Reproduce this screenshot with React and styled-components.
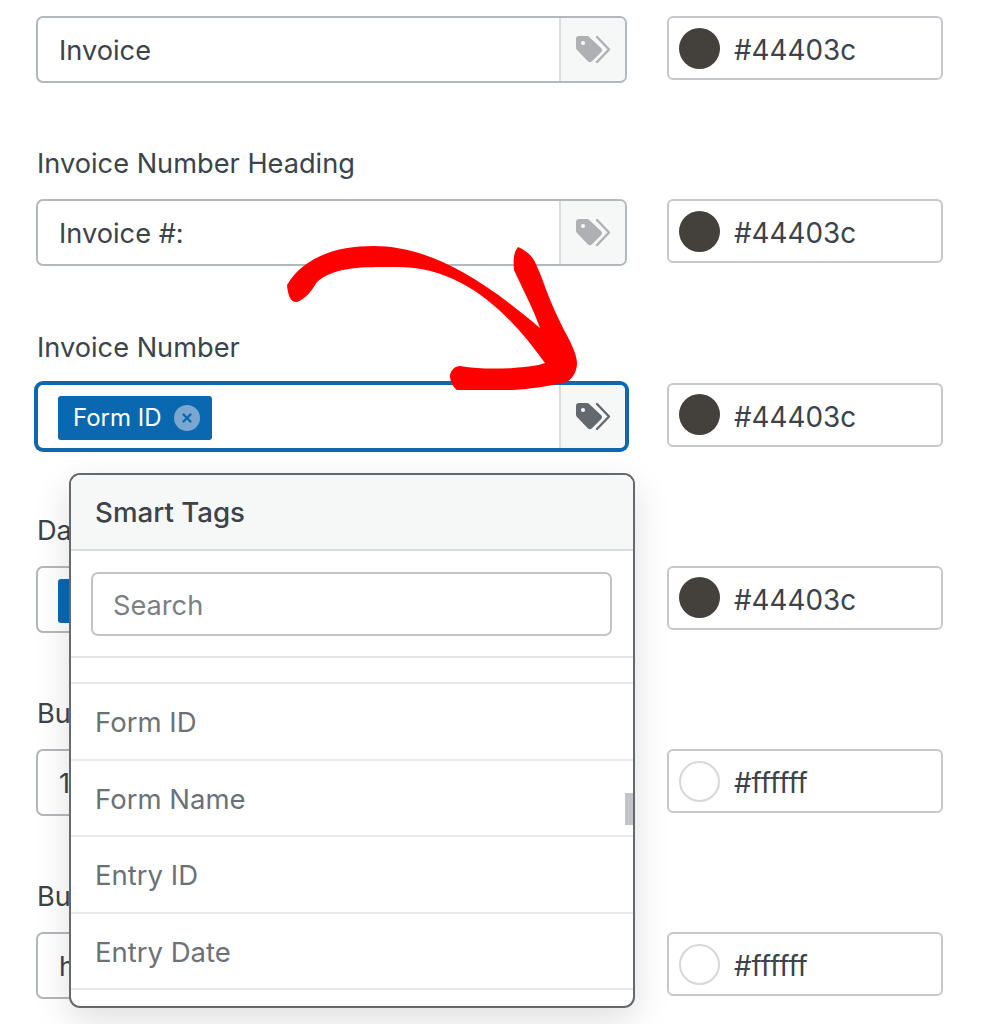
import React from "react";
import styled, { createGlobalStyle } from "styled-components";

const GlobalStyle = createGlobalStyle`
  html, body {
    margin: 0;
    padding: 0;
    background: #fff;
  }
  body {
    font-family: Inter, "Liberation Sans", sans-serif;
    color: #3c434a;
    overflow: hidden;
  }
`;

const Page = styled.div`
  position: relative;
  width: 1001px;
  height: 1024px;
  overflow: hidden;
  box-sizing: border-box;
  padding: 16px 0 0 36px;
`;

const Row = styled.div`
  margin-bottom: 62.3px;
`;

const Label = styled.div`
  font-size: 27.2px;
  line-height: 37px;
  height: 36px;
  margin: 0 0 18px 1px;
`;

const Fields = styled.div`
  display: grid;
  grid-template-columns: 591px 276px;
  column-gap: 40px;
  align-items: start;
`;

const InputBox = styled.div`
  box-sizing: border-box;
  height: 67px;
  display: flex;
  align-items: stretch;
  background: #fff;
  border: 2px solid ${(p) => (p.$focused ? "#0f68ae" : "#b4b7bb")};
  box-shadow: ${(p) => (p.$focused ? "0 0 0 2px #0f68ae" : "none")};
  border-radius: 7px;
`;

const InputText = styled.div`
  flex: 1;
  display: flex;
  align-items: center;
  padding: 2px 0 0 ${(p) => (p.$chip ? "20px" : "21px")};
  font-size: 27.2px;
  white-space: nowrap;
  overflow: hidden;
`;

const TagButton = styled.div`
  width: 66px;
  display: flex;
  align-items: center;
  justify-content: center;
  background: #f6f7f7;
  border-left: 2px solid #dcdcde;
  border-radius: 0 5px 5px 0;
  color: ${(p) => (p.$focused ? "#646970" : "#aeb0b4")};
  box-sizing: border-box;
`;

const Chip = styled.div`
  display: flex;
  align-items: center;
  gap: 12px;
  height: 44px;
  margin-top: 1px;
  padding: 0 12px 0 15px;
  background: #0a68b0;
  border-radius: 3px;
  color: #fff;
  font-size: 24px;
`;

const ChipClose = styled.span`
  width: 26px;
  height: 26px;
  border-radius: 50%;
  background: #7ba6cf;
  color: #0a68b0;
  display: flex;
  align-items: center;
  justify-content: center;
`;

const ColorBox = styled.div`
  box-sizing: border-box;
  height: 64px;
  display: flex;
  align-items: center;
  gap: 14px;
  padding-left: 10px;
  border: 2px solid #c6c8cc;
  border-radius: 6px;
  background: #fff;
`;

const ColorText = styled.span`
  font-size: 27.8px;
  margin-top: 4px;
`;

const Swatch = styled.span`
  box-sizing: border-box;
  width: 41px;
  height: 41px;
  border-radius: 50%;
  background: ${(p) => p.$color};
  border: ${(p) => (p.$color === "#ffffff" ? "2px solid #d6d7d9" : "none")};
`;

const Dropdown = styled.div`
  position: absolute;
  left: 69px;
  top: 473px;
  width: 566px;
  height: 535px;
  box-sizing: border-box;
  background: #fff;
  border: 2px solid #646970;
  border-radius: 11px;
  overflow: hidden;
  box-shadow: 0 12px 36px rgba(0, 0, 0, 0.13);
`;

const DropdownHeader = styled.div`
  box-sizing: border-box;
  height: 76px;
  display: flex;
  align-items: center;
  padding-left: 24px;
  background: #f6f7f7;
  border-bottom: 2px solid #dcdcde;
  font-size: 27.7px;
  font-weight: 500;
`;

const SearchArea = styled.div`
  box-sizing: border-box;
  height: 107px;
  padding: 21px 21px 0 20px;
  border-bottom: 2px solid #e4e5e7;
`;

const SearchInput = styled.div`
  box-sizing: border-box;
  height: 64px;
  display: flex;
  align-items: center;
  padding: 3px 0 0 20px;
  border: 2px solid #c3c4c7;
  border-radius: 7px;
  font-size: 27.2px;
  color: #7b8085;
`;

const List = styled.div`
  padding-top: 24px;
`;

const Item = styled.div`
  box-sizing: border-box;
  height: 76.5px;
  display: flex;
  align-items: center;
  padding: 2px 0 0 24px;
  border-top: 2px solid #e9eaeb;
  font-size: 27.5px;
  color: #6c7177;
  &:last-child {
    border-bottom: 2px solid #e9eaeb;
    height: 78px;
  }
`;

const ScrollThumb = styled.div`
  position: absolute;
  right: 0;
  top: 318px;
  width: 8px;
  height: 32px;
  background: #c3c4c7;
`;

const Arrow = styled.svg`
  position: absolute;
  left: 280px;
  top: 240px;
  width: 310px;
  height: 160px;
`;

const TagsIcon = () => (
  <svg width="36" height="29" viewBox="0 0 36 29">
    <path
      fill="currentColor"
      d="M1 4a3 3 0 0 1 3-3h8a3 3 0 0 1 2.2.9L26 13a3 3 0 0 1 0 4.2L17 26.2a3 3 0 0 1-4.2 0L2 15a3 3 0 0 1-1-2.2Z"
    />
    <circle cx="8" cy="8" r="2.1" fill="#f6f7f7" />
    <path
      fill="none"
      stroke="currentColor"
      strokeWidth="2.4"
      strokeLinecap="round"
      strokeLinejoin="round"
      d="M22 2L34 14.5L22 27"
    />
  </svg>
);

const rows = [
  { value: "Invoice", color: "#44403c" },
  { label: "Invoice Number Heading", value: "Invoice #:", color: "#44403c" },
  { label: "Invoice Number", chip: "Form ID", color: "#44403c", focused: true },
  { label: "Date", chip: "Entry Date", color: "#44403c" },
  { label: "Button Text", value: "1", color: "#ffffff" },
  { label: "Button Link", value: "https://", color: "#ffffff" },
];

const items = ["Form ID", "Form Name", "Entry ID", "Entry Date"];

const App = () => {
  return (
    <Page>
      <GlobalStyle />
      {rows.map((row, index) => (
        <Row key={index}>
          {row.label && <Label>{row.label}</Label>}
          <Fields>
            <InputBox $focused={row.focused}>
              <InputText $chip={!!row.chip}>
                {row.chip ? (
                  <Chip>
                    {row.chip}
                    <ChipClose>
                      <svg width="12" height="12" viewBox="0 0 12 12">
                        <path
                          d="M2.5 2.5l7 7M9.5 2.5l-7 7"
                          stroke="currentColor"
                          strokeWidth="2.4"
                          strokeLinecap="round"
                        />
                      </svg>
                    </ChipClose>
                  </Chip>
                ) : (
                  row.value
                )}
              </InputText>
              <TagButton $focused={row.focused}>
                <TagsIcon />
              </TagButton>
            </InputBox>
            <ColorBox>
              <Swatch $color={row.color} />
              <ColorText>{row.color}</ColorText>
            </ColorBox>
          </Fields>
        </Row>
      ))}
      <Dropdown>
        <DropdownHeader>Smart Tags</DropdownHeader>
        <SearchArea>
          <SearchInput>Search</SearchInput>
        </SearchArea>
        <List>
          {items.map((item) => (
            <Item key={item}>{item}</Item>
          ))}
        </List>
        <ScrollThumb />
      </Dropdown>
      <Arrow viewBox="280 240 310 160">
        <path
          fill="#ff0000"
          d="M287 285 C305 255 340 246 373 246 C420 246 470 268 540 328 C533 308 522 288 514 270 C513 258 514 252 518 247 C525 250 530 254 534 260 C540 272 544 284 547 292 C552 305 558 318 564 330 C570 341 576 352 577 362 C577 371 574 377 567 382 C550 386 530 389 513 390 C495 390 475 390 457 390 C452 386 450 381 450 375 C451 370 455 366 460 366 C478 369 495 369 513 368 C525 367 537 366 545 363 C510 315 465 267 397 267 C365 267 335 266 317 282 C311 292 305 299 297 302 C291 303 288 296 287 285 Z"
        />
      </Arrow>
    </Page>
  );
};

export default App;
